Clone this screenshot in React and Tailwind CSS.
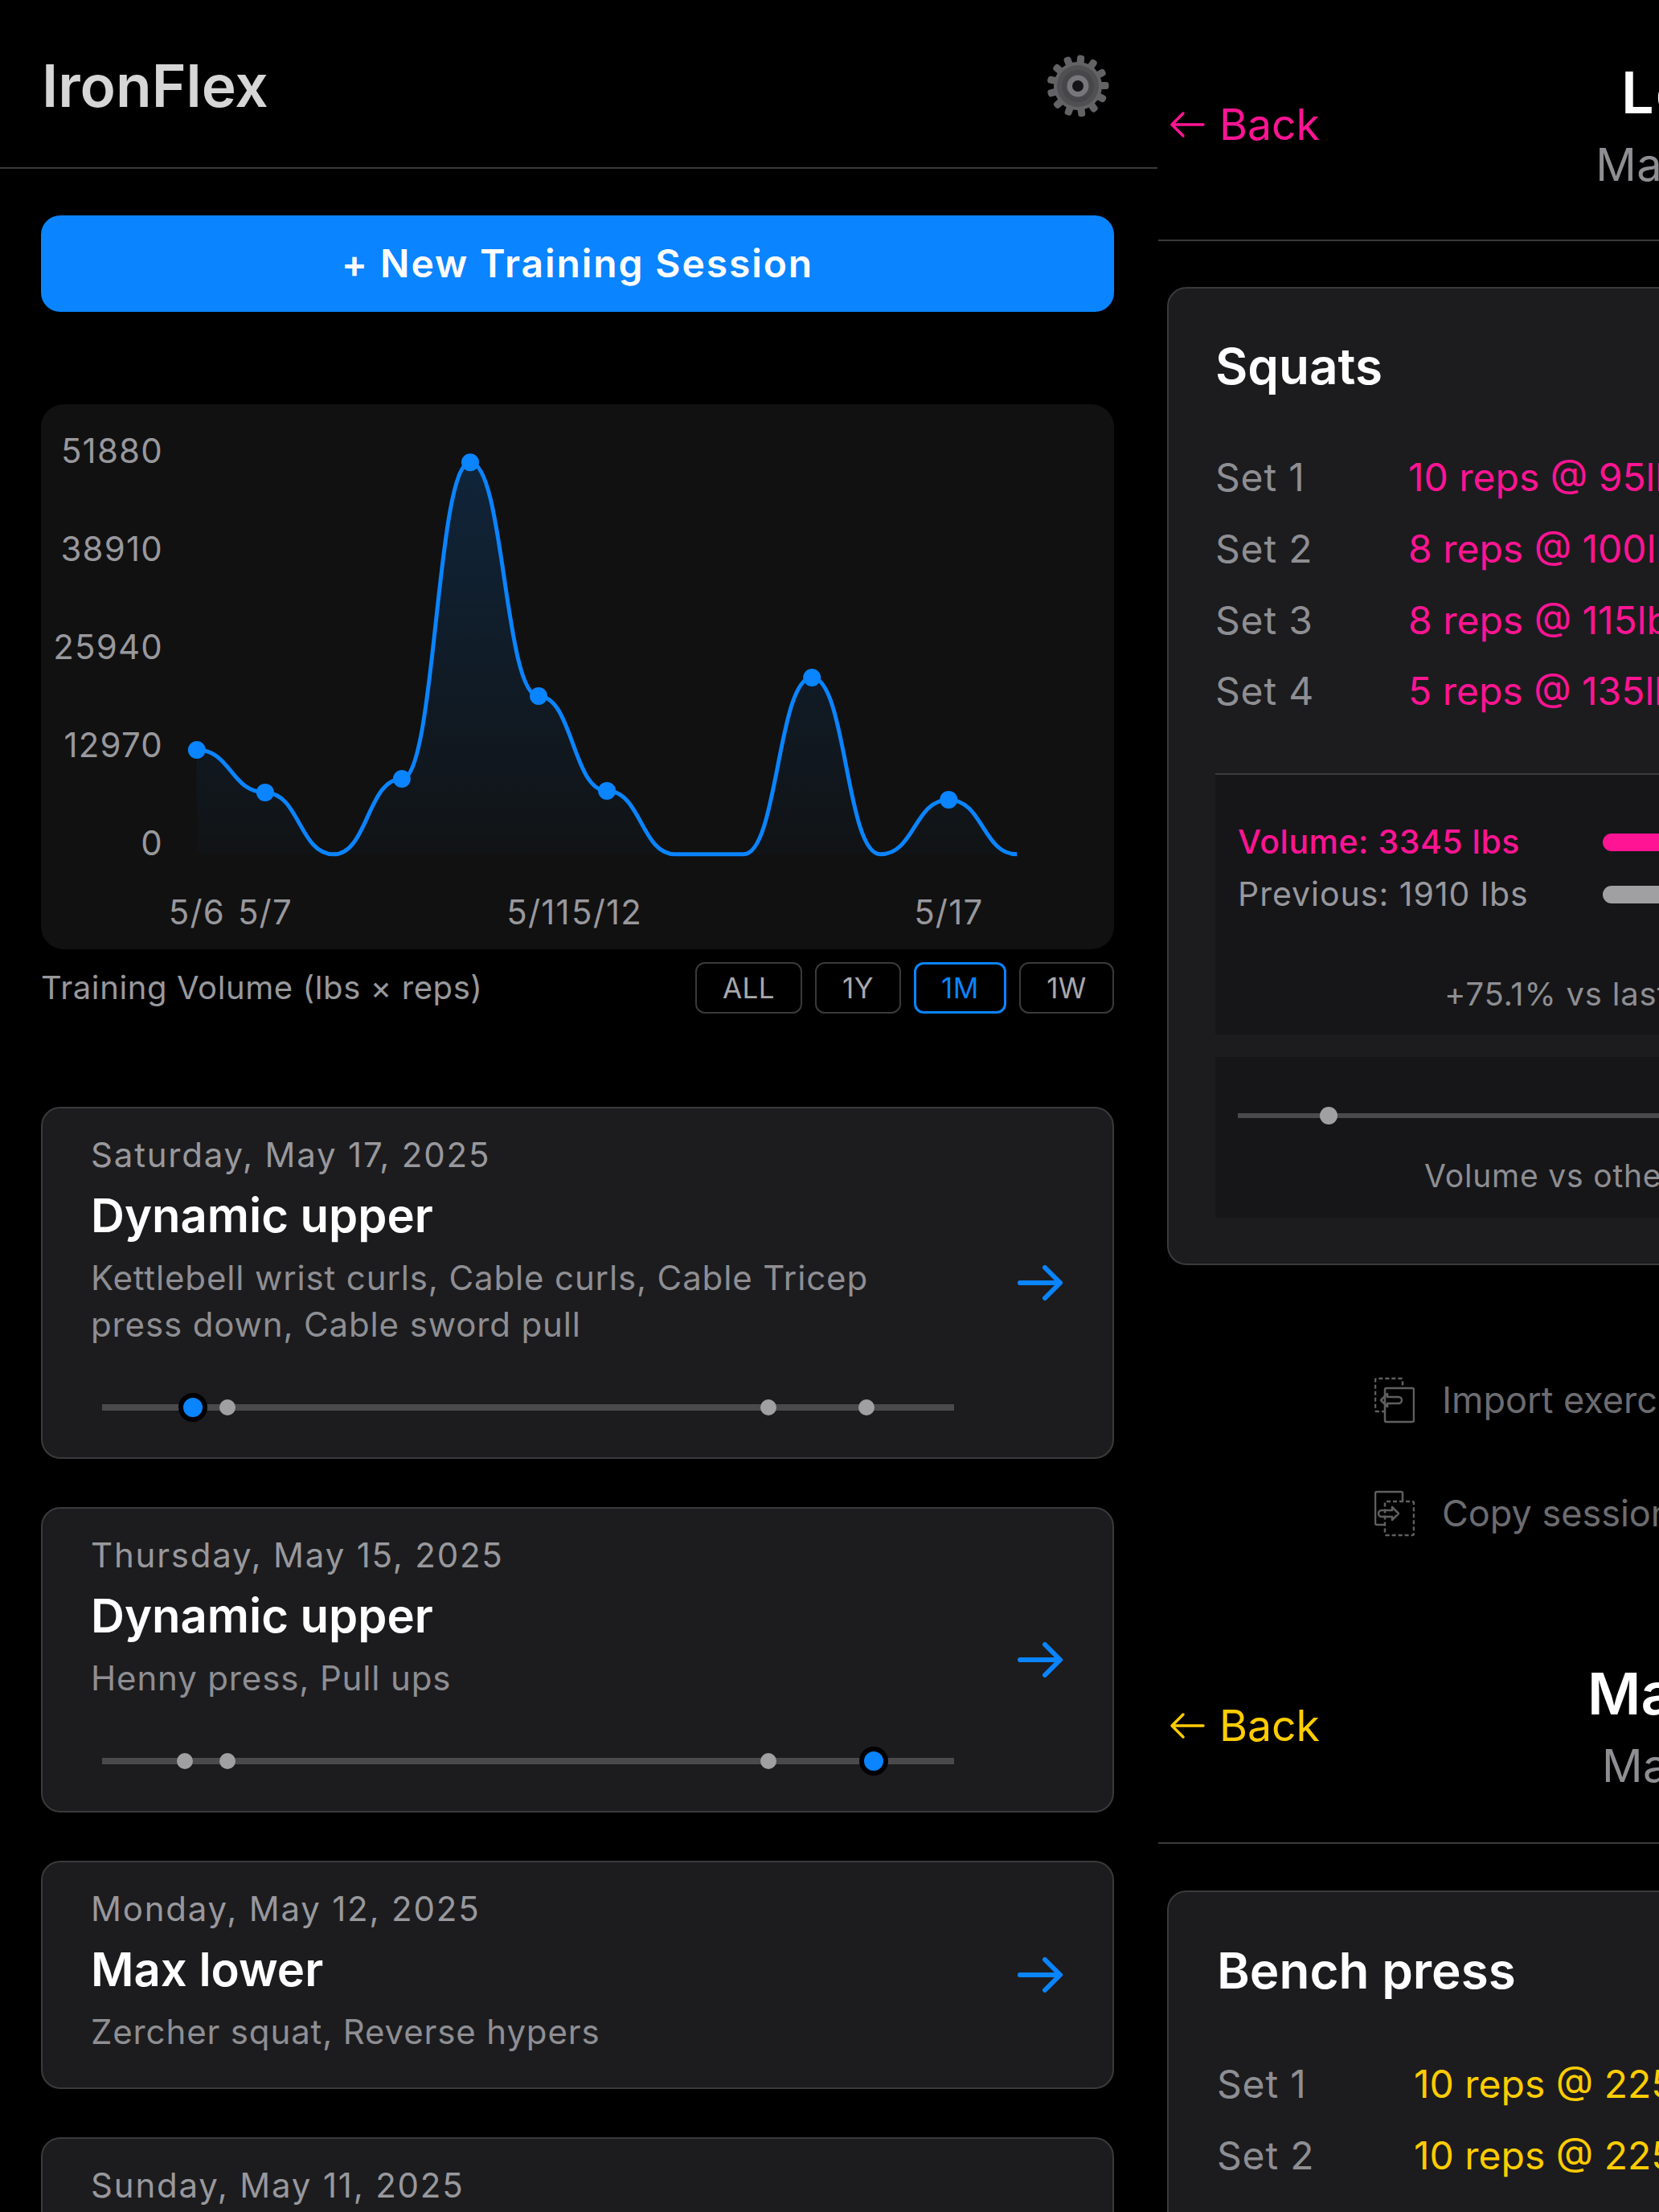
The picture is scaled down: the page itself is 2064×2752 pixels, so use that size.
import { useMemo } from "react";

const FONT = "[font-family:Inter,'Liberation_Sans',sans-serif]";

// chart data, already in panel pixels
const chartX = (i) => 194 + 85.1 * i;
const chartY = [430, 483, 560, 466, 72, 363, 481, 560, 560, 340, 560, 492, 560];

const yLabels = ["51880", "38910", "25940", "12970", "0"];
const xLabels = [
  { text: "5/6", i: 0 },
  { text: "5/7", i: 1 },
  { text: "5/11", i: 5 },
  { text: "5/12", i: 6 },
  { text: "5/17", i: 11 },
];

const ArrowLeft = ({ className }) => (
  <svg viewBox="0 0 44 34" className={className} fill="none" stroke="currentColor" strokeWidth="3.5" strokeLinecap="round" strokeLinejoin="round">
    <path d="M42 17H3M17 3L3 17l14 14" />
  </svg>
);

const ArrowRight = () => (
  <svg viewBox="0 0 56 44" className="mt-[6px] w-[56px] h-[44px] shrink-0 text-[#0a84ff]" fill="none" stroke="currentColor" strokeWidth="6" strokeLinecap="round" strokeLinejoin="round">
    <path d="M3 22h49M34 3l19 19-19 19" />
  </svg>
);

const Gear = () => {
  const teeth = Array.from({ length: 13 }, (_, i) => (i * 360) / 13 + 6);
  return (
    <svg viewBox="0 0 80 80" className="w-[80px] h-[80px]">
      {teeth.map((deg) => (
        <rect key={deg} x="35.5" y="1.5" width="9" height="14" rx="3.5" fill="#636366" transform={`rotate(${deg} 40 40)`} />
      ))}
      <circle cx="40" cy="40" r="30" fill="#636366" />
      <circle cx="40" cy="40" r="26" fill="#505053" />
      <circle cx="40" cy="40" r="20" fill="#47474a" />
      <circle cx="40" cy="40" r="13.5" fill="#77777b" />
      <circle cx="40" cy="40" r="7" fill="#141416" />
    </svg>
  );
};

const SessionIcon = ({ dashedBack }) => (
  <svg viewBox="0 0 50 58" className="w-[50px] h-[58px] shrink-0 text-[#5f5f62]" fill="none" stroke="currentColor" strokeWidth="2.5" strokeLinejoin="round">
    <path d="M14 43H3a2 2 0 0 1-2-2V4a2 2 0 0 1 2-2h30a2 2 0 0 1 2 2v10" strokeDasharray={dashedBack ? "5 3" : undefined} />
    <rect x="13" y="14" width="36" height="42" rx="2" strokeDasharray={dashedBack ? undefined : "5 3"} />
    {dashedBack ? (
      <path d="M8 29l8-8v4h14a1.500 1.500 0 0 1 0 8H16v4z" />
    ) : (
      <path d="M30 29l-8-8v4H9a1.500 1.500 0 0 0 0 8h13v4z" />
    )}
  </svg>
);

const VolumeChart = () => {
  const line = useMemo(() => {
    let d = `M${chartX(0)} ${chartY[0]}`;
    for (let i = 1; i < chartY.length; i++) {
      const mid = (chartX(i - 1) + chartX(i)) / 2;
      d += ` C${mid} ${chartY[i - 1]} ${mid} ${chartY[i]} ${chartX(i)} ${chartY[i]}`;
    }
    return d;
  }, []);
  const last = chartX(chartY.length - 1);

  return (
    <svg viewBox="0 0 1336 678" className="w-full h-full">
      <defs>
        <linearGradient id="volumeFill" x1="0" y1="72" x2="0" y2="560" gradientUnits="userSpaceOnUse">
          <stop offset="0" stopColor="#0a84ff" stopOpacity="0.17" />
          <stop offset="1" stopColor="#0a84ff" stopOpacity="0.02" />
        </linearGradient>
      </defs>
      <path d={`${line} L${last} 560 L${chartX(0)} 560 Z`} fill="url(#volumeFill)" />
      <path d={line} fill="none" stroke="#0a84ff" strokeWidth="5" />
      {chartY.map((y, i) =>
        y < 560 ? <circle key={i} cx={chartX(i)} cy={y} r="11" fill="#0a84ff" /> : null
      )}
      <g fill="#98989d" fontSize="42" letterSpacing="1.2" fontFamily="Inter, sans-serif">
        {yLabels.map((t, i) => (
          <text key={t} x="152" y={58 + i * 122} dy="15" textAnchor="end">{t}</text>
        ))}
        {xLabels.map((l) => (
          <text key={l.text} x={chartX(l.i)} y="647" textAnchor="middle">{l.text}</text>
        ))}
      </g>
    </svg>
  );
};

const RangeButton = ({ label, width, active }) => (
  <div
    className={`h-[64px] flex items-center justify-center rounded-[12px] text-[35px] tracking-[0.5px] ${
      active ? "border-[3px] border-[#0a84ff] text-[#0a84ff]" : "border-2 border-[#3a3a3c] text-[#a8a8ad]"
    } ${width}`}
  >
    {label}
  </div>
);

// Position of a dot along the slider track is data, hence the inline left
const SliderDots = ({ dots, active }) => (
  <div className="relative h-[34px] w-[1060px] ml-[14px]">
    <div className="absolute left-0 right-0 top-[13px] h-[8px] bg-[#4a4a4c]" />
    {dots.map((x) => (
      <div key={x} className="absolute top-[7px] w-[20px] h-[20px] -ml-[10px] rounded-full bg-[#a0a0a3]" style={{ left: x }} />
    ))}
    <div className="absolute -top-[1px] w-[36px] h-[36px] -ml-[18px] rounded-full bg-[#0a84ff] border-[6px] border-black" style={{ left: active }} />
  </div>
);

const SessionCard = ({ date, title, desc, dots, active }) => (
  <div className="flex items-center justify-between rounded-[24px] border-2 border-[#3a3a3c] bg-[#1c1c1e] pl-[60px] pr-[62px] pt-[34px] pb-[40px]">
    <div className="w-[1090px]">
      <div className="h-[48px] leading-[48px] text-[42px] tracking-[1.8px] text-[#98989d]">{date}</div>
      <div className="mt-[16px] h-[70px] leading-[70px] text-[58px] font-semibold text-white">{title}</div>
      <div className="mt-[14px] leading-[58px] text-[42px] tracking-[0.86px] text-[#8e8e93]">{desc}</div>
      {dots && (
        <div className="mt-[57px] mb-[5px]">
          <SliderDots dots={dots} active={active} />
        </div>
      )}
    </div>
    <ArrowRight />
  </div>
);

const DetailHeader = ({ color, title, sub, height, pad, titleClass }) => (
  <div className={`grid grid-cols-[1fr_auto_1fr] items-center border-b-2 border-[#3a3a3c] ${height} ${pad}`}>
    <div className={`flex items-center gap-[18px] pl-[14px] text-[53.500px] ${color}`}>
      <ArrowLeft className="w-[44px] h-[34px]" />
      <span>Back</span>
    </div>
    <div className="text-center">
      <div className={`h-[80px] leading-[80px] text-[72px] font-semibold text-white ${titleClass}`}>{title}</div>
      <div className="mt-[20px] h-[60px] leading-[60px] text-[56px] tracking-[0.5px] text-[#8e8e93]">{sub}</div>
    </div>
    <div />
  </div>
);

const SetRow = ({ n, text, color, col }) => (
  <div className="flex h-[88.700px] items-center text-[48px]">
    <div className={`text-[#8e8e93] tracking-[0.8px] ${col}`}>Set {n}</div>
    <div className={color}>{text}</div>
  </div>
);

const App = () => {
  return (
    <div className={`flex w-[2064px] h-[2752px] overflow-hidden bg-black ${FONT}`}>
      {/* session list */}
      <div className="w-[1440px] shrink-0">
        <div className="flex h-[210px] items-center justify-between border-b-2 border-[#3a3a3c] pl-[52px] pr-[59px] pt-[5px]">
          <div className="text-[73px] font-semibold text-[#d6d6d6]">IronFlex</div>
          <Gear />
        </div>

        <div className="pl-[51px] pr-[54px]">
          <div className="mt-[58px] h-[120px] flex items-center justify-center rounded-[24px] bg-[#0a84ff] text-[48px] tracking-[1.9px] font-semibold text-white">
            + New Training Session
          </div>

          <div className="mt-[115px] h-[678px] rounded-[28px] bg-[#111111]">
            <VolumeChart />
          </div>

          <div className="mt-[16px] flex items-center justify-between">
            <div className="text-[40px] tracking-[0.6px] text-[#98989d]">Training Volume (lbs × reps)</div>
            <div className="flex gap-[16px]">
              <RangeButton label="ALL" width="w-[133px]" />
              <RangeButton label="1Y" width="w-[107px]" />
              <RangeButton label="1M" width="w-[115px]" active />
              <RangeButton label="1W" width="w-[118px]" />
            </div>
          </div>

          <div className="mt-[116px] flex flex-col gap-[60px]">
            <SessionCard
              date="Saturday, May 17, 2025"
              title="Dynamic upper"
              desc={<>Kettlebell wrist curls, Cable curls, Cable Tricep<br />press down, Cable sword pull</>}
              dots={[156, 829, 951]}
              active={113}
            />
            <SessionCard
              date="Thursday, May 15, 2025"
              title="Dynamic upper"
              desc="Henny press, Pull ups"
              dots={[103, 156, 829]}
              active={960}
            />
            <SessionCard date="Monday, May 12, 2025" title="Max lower" desc="Zercher squat, Reverse hypers" />
            <SessionCard date="Sunday, May 11, 2025" title="Dynamic lower" desc="Squats, Leg press" />
          </div>
        </div>
      </div>

      {/* session details, cut off by the window edge */}
      <div className="w-[1440px] shrink-0 ml-[1px]">
        <DetailHeader color="text-[#ff1493]" title="Leg day" titleClass="tracking-[2px]" sub="May 17, 2025" height="h-[300px]" pad="pt-[12px]" />

        <div className="mx-[11px] mt-[57px] rounded-[24px] border-2 border-[#3a3a3c] bg-[#1c1c1e] px-[58px] pt-[61px] pb-[57px]">
          <div className="h-[72px] leading-[72px] text-[62px] font-semibold text-white">Squats</div>
          <div className="mt-[58px]">
            <SetRow n="1" text="10 reps @ 95lbs" color="text-[#ff1493]" col="w-[240px]" />
            <SetRow n="2" text="8 reps @ 100lbs" color="text-[#ff1493]" col="w-[240px]" />
            <SetRow n="3" text="8 reps @ 115lbs" color="text-[#ff1493]" col="w-[240px]" />
            <SetRow n="4" text="5 reps @ 135lbs" color="text-[#ff1493]" col="w-[240px]" />
          </div>

          <div className="mt-[57px] border-t-2 border-[#3a3a3c] bg-[#161618] px-[28px] pt-[57px] pb-[26px]">
            <div className="flex h-[54px] items-center text-[41px] tracking-[0.5px] font-medium text-[#ff1493]">
              <div className="w-[454px]">Volume: 3345 lbs</div>
              <div className="flex-1 h-[22px] rounded-full bg-[#ff1493]" />
            </div>
            <div className="mt-[11px] flex h-[54px] items-center text-[41px] tracking-[1px] text-[#98989d]">
              <div className="w-[454px]">Previous: 1910 lbs</div>
              <div className="flex-1 h-[22px] rounded-full bg-[#a0a0a3] mr-[300px]" />
            </div>
            <div className="mt-[73px] w-[954px] h-[48px] leading-[48px] text-center text-[40px] tracking-[0.8px] text-[#8e8e93]">+75.1% vs last session</div>
          </div>

          <div className="mt-[28px] bg-[#161618] px-[28px] pt-[62px] pb-[28px]">
            <div className="relative h-[22px]">
              <div className="absolute left-0 right-0 top-[8px] h-[6px] bg-[#4a4a4c]" />
              <div className="absolute left-[102px] top-0 w-[22px] h-[22px] rounded-full bg-[#a0a0a3]" />
            </div>
            <div className="mt-[40px] w-[954px] h-[48px] leading-[48px] text-center text-[39px] tracking-[0.8px] text-[#8e8e93]">Volume vs other sessions</div>
          </div>
        </div>

        <div className="mt-[138px] pl-[269px] flex items-center gap-[34px] h-[60px] text-[45px] text-[#6c6c70]">
          <SessionIcon dashedBack />
          <span>Import exercises from session</span>
        </div>
        <div className="mt-[81px] pl-[269px] flex items-center gap-[34px] h-[60px] text-[45px] text-[#6c6c70]">
          <SessionIcon />
          <span>Copy session to another day</span>
        </div>

        <div className="mt-[89px]">
          <DetailHeader color="text-[#ffcc00]" title="Max upper" sub="May 5, 2025" height="h-[292px]" />
        </div>

        <div className="mx-[11px] mt-[58px] rounded-[24px] border-2 border-[#3a3a3c] bg-[#1c1c1e] px-[60px] pt-[62px] pb-[57px]">
          <div className="h-[72px] leading-[72px] text-[62px] font-semibold text-white">Bench press</div>
          <div className="mt-[61px]">
            <SetRow n="1" text="10 reps @ 225lbs" color="text-[#ffcc00]" col="w-[245px]" />
            <SetRow n="2" text="10 reps @ 225lbs" color="text-[#ffcc00]" col="w-[245px]" />
          </div>
        </div>
      </div>
    </div>
  );
};

export default App;
